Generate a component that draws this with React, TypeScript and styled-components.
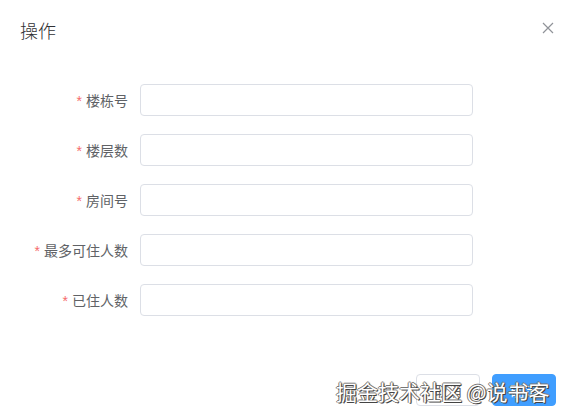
import React from 'react';
import styled, { createGlobalStyle } from 'styled-components';

const GlobalStyle = createGlobalStyle`
  html, body {
    margin: 0;
    padding: 0;
    background: #fff;
  }
  body {
    font-family: "Helvetica Neue", Helvetica, "Liberation Sans", "Noto Sans CJK SC", sans-serif;
  }
  * {
    box-sizing: border-box;
  }
`;

const Dialog = styled.div`
  position: relative;
  width: 571px;
  height: 418px;
  background: #fff;
  display: flex;
  flex-direction: column;
  overflow: hidden;
`;

const Header = styled.div`
  display: flex;
  justify-content: space-between;
  align-items: flex-start;
  padding: 18px 16px 0 20px;
  height: 42px;
`;

const Title = styled.span`
  font-size: 18px;
  line-height: 24px;
  color: #303133;
  font-weight: 300;
  font-family: "Noto Sans CJK SC", sans-serif;
`;

const CloseButton = styled.button`
  border: none;
  background: transparent;
  padding: 0;
  width: 14px;
  height: 14px;
  margin-top: 3px;
  display: flex;
  align-items: center;
  justify-content: center;
  color: #909399;
  cursor: pointer;
`;

const Body = styled.div`
  padding: 42px 20px 0 20px;
`;

const Form = styled.form`
  display: flex;
  flex-direction: column;
  gap: 18px;
`;

const FormItem = styled.div`
  display: flex;
  align-items: center;
  height: 32px;
`;

const Label = styled.label`
  width: 120px;
  padding-right: 12px;
  text-align: right;
  font-size: 14px;
  line-height: 32px;
  color: #606266;
  font-family: "Noto Sans CJK SC", sans-serif;
  white-space: nowrap;
`;

const Required = styled.span`
  color: #f56c6c;
  margin-right: 4px;
  font-family: "Liberation Sans", sans-serif;
`;

const Input = styled.input`
  width: 333px;
  height: 32px;
  border: 1px solid #dcdfe6;
  border-radius: 4px;
  padding: 0 15px;
  font-size: 14px;
  color: #606266;
  outline: none;
  background: #fff;
`;

const Footer = styled.div`
  display: flex;
  justify-content: flex-end;
  gap: 12px;
  padding: 58px 15px 0 0;
`;

const Button = styled.button<{ $primary?: boolean }>`
  width: 64px;
  height: 32px;
  border-radius: 4px;
  font-size: 14px;
  font-family: "Noto Sans CJK SC", sans-serif;
  border: 1px solid ${(p) => (p.$primary ? '#409eff' : '#dcdfe6')};
  background: ${(p) => (p.$primary ? '#409eff' : '#fff')};
  color: ${(p) => (p.$primary ? '#fff' : '#606266')};
  cursor: pointer;
  padding: 0;
`;

const Watermark = styled.div`
  position: absolute;
  left: 336px;
  top: 377px;
  font-size: 21px;
  line-height: 28px;
  white-space: nowrap;
  color: #fff;
  font-family: "Noto Sans CJK SC", sans-serif;
  text-shadow: 1px 1px 0 #444, -1px 0 0 #777, 0 -1px 0 #777, 1px 0 1px #555;
  pointer-events: none;
`;

const fields = ['楼栋号', '楼层数', '房间号', '最多可住人数', '已住人数'];

const App: React.FC = () => {
  return (
    <>
      <GlobalStyle />
      <Dialog>
        <Header>
          <Title>操作</Title>
          <CloseButton aria-label="关闭">
            <svg width="12" height="12" viewBox="0 0 12 12">
              <path d="M1 1L11 11M11 1L1 11" stroke="currentColor" strokeWidth="1.2" />
            </svg>
          </CloseButton>
        </Header>
        <Body>
          <Form onSubmit={(e) => e.preventDefault()}>
            {fields.map((f) => (
              <FormItem key={f}>
                <Label>
                  <Required>*</Required>
                  {f}
                </Label>
                <Input type="text" />
              </FormItem>
            ))}
          </Form>
        </Body>
        <Footer>
          <Button type="button">取消</Button>
          <Button type="button" $primary>
            确定
          </Button>
        </Footer>
        <Watermark>掘金技术社区 @说书客</Watermark>
      </Dialog>
    </>
  );
};

export default App;
